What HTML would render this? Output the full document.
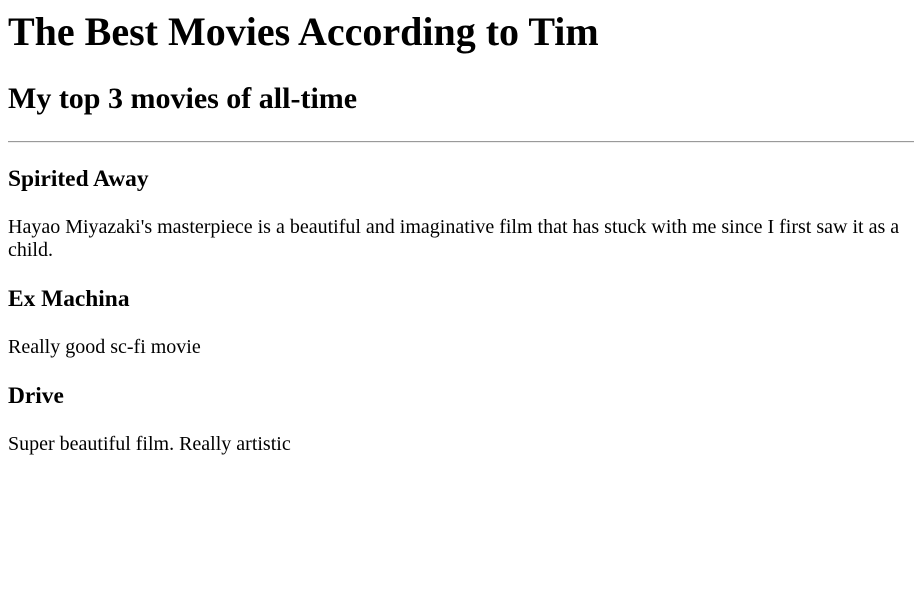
<!DOCTYPE html>
<html>
<head>
<meta charset="utf-8">
<style>
body { margin: 8px; font-family: "Liberation Serif", serif; color: #000; background: #fff; font-size: 20px; }
h1 { font-size: 40px; margin: 0 0 0.67em; }
h2 { font-size: 30px; margin: 0.83em 0; }
h3 { font-size: 23.4px; margin: 1em 0; }
p { font-size: 20px; margin: 1em 0; }
hr { margin: 10px 0; border: 0; border-top: 1px solid #9a9a9a; border-bottom: 1px solid #eee; }
</style>
</head>
<body>
<h1>The Best Movies According to Tim</h1>
<h2>My top 3 movies of all-time</h2>
<hr>
<h3>Spirited Away</h3>
<p>Hayao Miyazaki's masterpiece is a beautiful and imaginative film that has stuck with me since I first saw it as a child.</p>
<h3>Ex Machina</h3>
<p>Really good sc-fi movie</p>
<h3>Drive</h3>
<p>Super beautiful film. Really artistic</p>
</body>
</html>
